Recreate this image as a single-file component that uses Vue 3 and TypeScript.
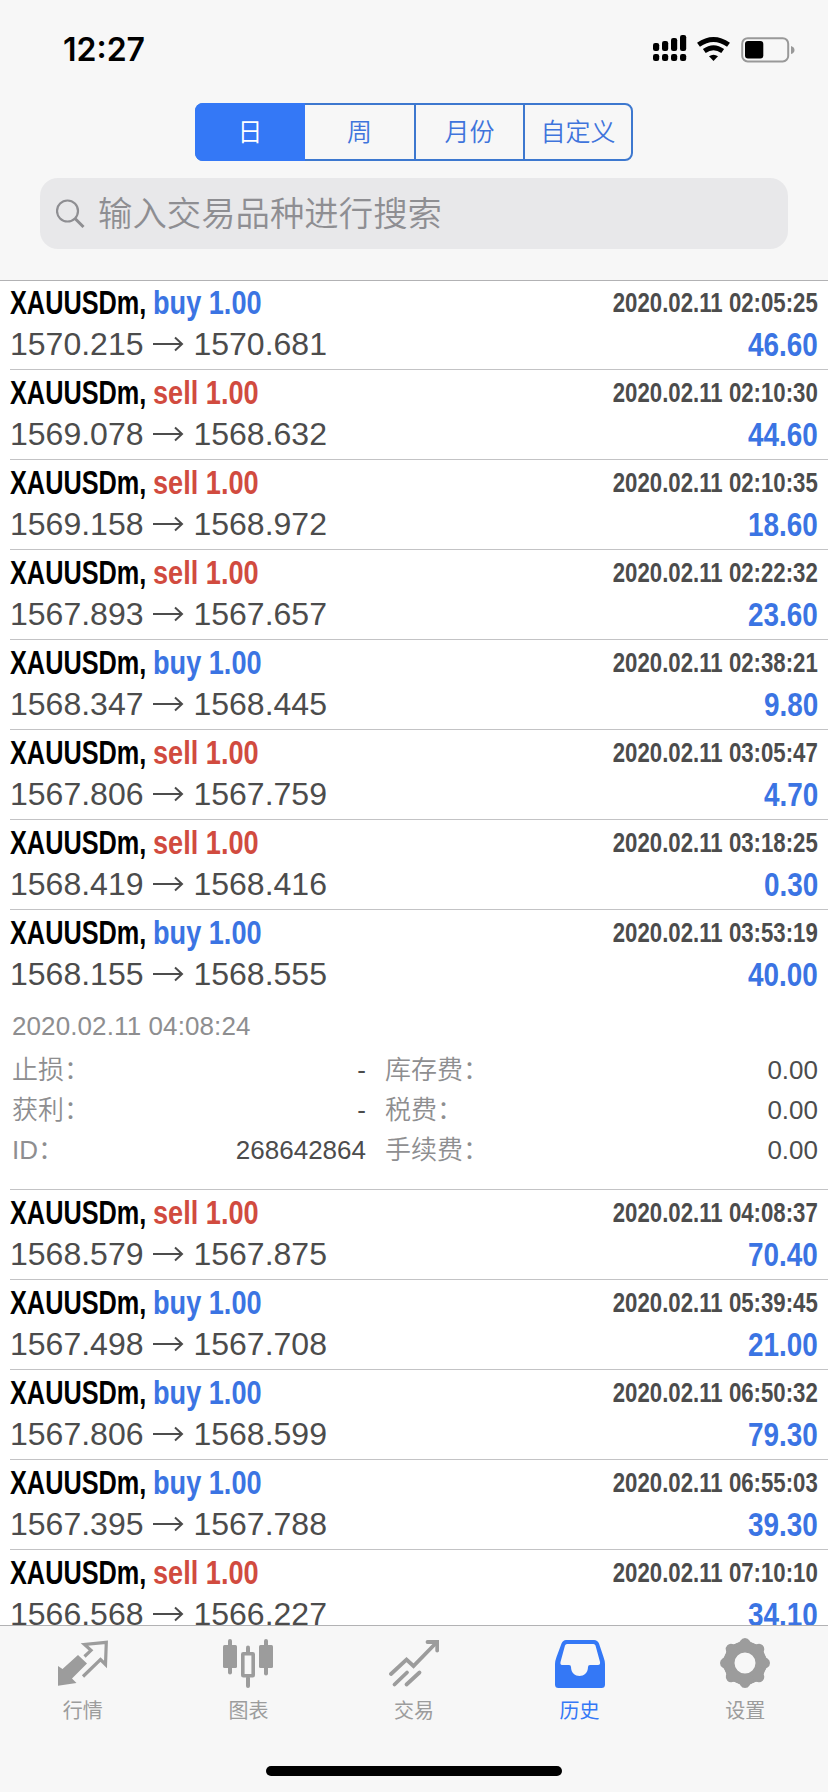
<script setup lang="ts">
interface Deal {
  side: 'buy' | 'sell'
  open: string
  close: string
  time: string
  profit: string
  expanded?: boolean
}

const periods: string[] = ['日', '周', '月份', '自定义']
const activePeriod = '日'

const deals: Deal[] = [
  { side: 'buy', open: '1570.215', close: '1570.681', time: '02:05:25', profit: '46.60' },
  { side: 'sell', open: '1569.078', close: '1568.632', time: '02:10:30', profit: '44.60' },
  { side: 'sell', open: '1569.158', close: '1568.972', time: '02:10:35', profit: '18.60' },
  { side: 'sell', open: '1567.893', close: '1567.657', time: '02:22:32', profit: '23.60' },
  { side: 'buy', open: '1568.347', close: '1568.445', time: '02:38:21', profit: '9.80' },
  { side: 'sell', open: '1567.806', close: '1567.759', time: '03:05:47', profit: '4.70' },
  { side: 'sell', open: '1568.419', close: '1568.416', time: '03:18:25', profit: '0.30' },
  { side: 'buy', open: '1568.155', close: '1568.555', time: '03:53:19', profit: '40.00', expanded: true },
  { side: 'sell', open: '1568.579', close: '1567.875', time: '04:08:37', profit: '70.40' },
  { side: 'buy', open: '1567.498', close: '1567.708', time: '05:39:45', profit: '21.00' },
  { side: 'buy', open: '1567.806', close: '1568.599', time: '06:50:32', profit: '79.30' },
  { side: 'buy', open: '1567.395', close: '1567.788', time: '06:55:03', profit: '39.30' },
  { side: 'sell', open: '1566.568', close: '1566.227', time: '07:10:10', profit: '34.10' },
]

const details = [
  { left: '止损：', leftValue: '-', right: '库存费：', rightValue: '0.00' },
  { left: '获利：', leftValue: '-', right: '税费：', rightValue: '0.00' },
  { left: 'ID：', leftValue: '268642864', right: '手续费：', rightValue: '0.00' },
]

const tabs = [
  { id: 'quotes', label: '行情' },
  { id: 'chart', label: '图表' },
  { id: 'trade', label: '交易' },
  { id: 'history', label: '历史' },
  { id: 'settings', label: '设置' },
]
</script>

<template>
  <div class="screen">
    <header class="header">
      <div class="status">
        <span class="clock">12:27</span>
        <svg class="status-icons" width="142" height="30" viewBox="0 0 142 30">
          <rect x="0" y="10" width="6.200" height="8" rx="2.200" />
          <rect x="9" y="8" width="6.200" height="10" rx="2.200" />
          <rect x="18" y="5" width="6.200" height="13" rx="2.200" />
          <rect x="27" y="2" width="6.200" height="16" rx="2.200" />
          <rect x="0" y="21" width="6.200" height="7" rx="2.200" />
          <rect x="9" y="21" width="6.200" height="7" rx="2.200" />
          <rect x="18" y="21" width="6.200" height="7" rx="2.200" />
          <rect x="27" y="21" width="6.200" height="7" rx="2.200" />
          <path d="M45.500 11.800 Q60.500 1.200 75.500 11.800" fill="none" stroke="#000" stroke-width="5" />
          <path d="M51.300 18 Q60.500 11.400 69.700 18" fill="none" stroke="#000" stroke-width="4.800" />
          <path d="M56 23.300 Q60.500 20 65 23.300 L60.500 28 Z" />
          <rect x="89.200" y="5.200" width="46" height="23.200" rx="5.500" fill="none" stroke="#999" stroke-width="2" />
          <rect x="92" y="8" width="18.300" height="17.500" rx="3" />
          <path d="M138 13 Q141.500 14 141.500 17 Q141.500 20 138 21 Z" fill="#999" />
        </svg>
      </div>
      <div class="segments">
        <div v-for="p in periods" :key="p" class="segment" :class="{ active: p === activePeriod }">{{ p }}</div>
      </div>
      <div class="search">
        <svg class="search-icon" width="30" height="30" viewBox="0 0 30 30" fill="none" stroke="#8e8e92">
          <circle cx="11.500" cy="12" r="10.500" stroke-width="2.200" />
          <path d="M19 19.500 L27.500 28" stroke-width="3" />
        </svg>
        <span class="placeholder">输入交易品种进行搜索</span>
      </div>
    </header>

    <main class="list">
      <article v-for="d in deals" :key="d.time" class="deal" :class="{ expanded: d.expanded }">
        <div class="summary">
          <div class="left">
            <div class="title">
              <span class="symbol"><b>XAUUSDm,</b></span>
              <b class="side" :class="d.side">{{ d.side }} 1.00</b>
            </div>
            <div class="prices">
              <span class="price">{{ d.open }}</span>
              <svg class="arrow" width="32" height="16" viewBox="0 0 32 16" fill="none" stroke="#4c4c4c" stroke-width="2">
                <path d="M1 8 H30 M23 1.500 L30 8 L23 14.500" />
              </svg>
              <span class="price">{{ d.close }}</span>
            </div>
          </div>
          <div class="right">
            <b class="time">2020.02.11 {{ d.time }}</b>
            <b class="profit">{{ d.profit }}</b>
          </div>
        </div>
        <div v-if="d.expanded" class="details">
          <div class="close-time">2020.02.11 04:08:24</div>
          <div v-for="r in details" :key="r.left" class="detail-row">
            <span class="label">{{ r.left }}</span>
            <span class="value">{{ r.leftValue }}</span>
            <span class="label second">{{ r.right }}</span>
            <span class="value">{{ r.rightValue }}</span>
          </div>
        </div>
      </article>
    </main>

    <nav class="tabbar">
      <div class="tabs">
        <div v-for="t in tabs" :key="t.id" class="tab" :class="{ current: t.id === 'history' }">
          <svg width="50" height="50" viewBox="0 0 50 50" fill="currentColor">
            <template v-if="t.id === 'quotes'">
              <path d="M0 28 L4.500 31 L20 17 L29 25.500 L14 40.500 L18.500 45 L0 47.800 Z" />
              <path d="M26.500 18.500 L33 12.300 L26.500 6.500 L48.300 4.300 L47.500 26.500 L42.500 21.500 L25 38.500" fill="none" stroke="currentColor" stroke-width="3.200" />
            </template>
            <template v-else-if="t.id === 'chart'">
              <rect x="0" y="7" width="14" height="23" rx="1.500" />
              <rect x="5" y="1" width="4" height="35.500" rx="2" />
              <rect x="19.800" y="15.800" width="10.400" height="22" rx="0.500" fill="none" stroke="currentColor" stroke-width="3.600" />
              <rect x="23" y="7.500" width="4" height="8" rx="2" />
              <rect x="23" y="38" width="4" height="12" rx="2" />
              <rect x="36" y="7" width="14" height="23" rx="1.500" />
              <rect x="41" y="1" width="4" height="36.500" rx="2" />
            </template>
            <template v-else-if="t.id === 'trade'">
              <g fill="none" stroke="currentColor" stroke-width="3.800" stroke-linecap="round">
                <path d="M2 36 L17.500 21.500 L24.500 28 L47.500 4.500" />
                <path d="M38.500 4 H48.200 V12.500" />
                <path d="M5.500 46.500 L18 34.500 M17.500 46.500 L30.500 34.500" />
              </g>
            </template>
            <template v-else-if="t.id === 'history'">
              <path fill-rule="evenodd" d="M11 2 H39 Q42.500 2 44 5.500 L48.500 19 Q50 23 50 26 V46.500 Q50 50 46.500 50 H3.500 Q0 50 0 46.500 V26 Q0 23 1.500 19 L6.500 5.500 Q8 2 11 2 Z M12 6 Q10.500 6 10 7.500 L5.500 24 Q5 27 7 27 H14 Q16 27 16 29 C16 41 33 41 33 29 Q33 27 35 27 H43 Q45.500 27 45 24 L40.500 7.500 Q40 6 38.500 6 Z" />
            </template>
            <template v-else>
              <g>
                <circle cx="25" cy="25" r="16" fill="none" stroke="currentColor" stroke-width="11" />
                <g v-for="n in 8" :key="n" :transform="`rotate(${n * 45} 25 25)`">
                  <path d="M14 6 Q18.500 6.500 20.500 2.500 Q22 0 25 0 Q28 0 29.500 2.500 Q31.500 6.500 36 6 L30 14 H20 Z" />
                </g>
              </g>
            </template>
          </svg>
          <span class="tab-label">{{ t.label }}</span>
        </div>
      </div>
      <div class="home"></div>
    </nav>
  </div>
</template>

<style>
body {
  margin: 0;
  background: #fff;
}
</style>

<style scoped>
.screen {
  width: 828px;
  height: 1792px;
  overflow: hidden;
  display: flex;
  flex-direction: column;
  background: #fff;
  font-family: "Liberation Sans", "Noto Sans CJK SC", sans-serif;
  white-space: nowrap;
}
.header {
  box-sizing: border-box;
  height: 280px;
  flex: none;
  background: #f7f7f7;
}
.status {
  box-sizing: border-box;
  height: 103px;
  padding: 33px 33px 0 63px;
  display: flex;
  justify-content: space-between;
  align-items: flex-start;
}
.clock {
  font: 600 32px/34px Inter, sans-serif;
  color: #000;
}
.segments {
  box-sizing: border-box;
  width: 438px;
  height: 58px;
  margin-left: 195px;
  display: grid;
  grid-template-columns: 108px 109px 109px 108px;
  border: 2px solid #3d78cf;
  border-radius: 8px;
}
.segment {
  display: flex;
  align-items: center;
  justify-content: center;
  font-size: 25px;
  line-height: 54px;
  font-weight: 350;
  color: #3f74dc;
}
.segment + .segment + .segment {
  border-left: 2px solid #3d78cf;
}
.segment.active {
  margin: -2px 0 -2px -2px;
  border-radius: 8px 0 0 8px;
  background: #3478f6;
  color: #fff;
}
.search {
  box-sizing: border-box;
  width: 748px;
  height: 71px;
  margin: 17px 0 0 40px;
  padding-left: 16px;
  display: flex;
  align-items: center;
  border-radius: 18px;
  background: #e8e8ea;
}
.placeholder {
  margin-left: 12px;
  font-size: 34.400px;
  line-height: 68px;
  font-weight: 350;
  color: #8e8e92;
}
.list {
  height: 1345px;
  flex: none;
  overflow: hidden;
}
.deal {
  box-sizing: border-box;
  height: 90px;
  margin-left: 10px;
  border-top: 1px solid #c3c3c5;
}
.deal:first-child {
  height: 89px;
  margin-left: 0;
  padding-left: 10px;
  border-top-color: #b2b2b4;
}
.deal:first-child .summary {
  margin-top: -1px;
}
.deal.expanded {
  height: 280px;
}
.summary {
  display: flex;
  justify-content: space-between;
  padding-right: 10px;
}
.title {
  display: flex;
  height: 44px;
  font-size: 33.500px;
  line-height: 45px;
}
.symbol {
  width: 143px;
  color: #000;
}
.symbol b {
  display: inline-block;
  transform: scaleX(0.755);
  transform-origin: 0 50%;
}
.side {
  transform: scaleX(0.81);
  transform-origin: 0 50%;
}
.buy {
  color: #3b74e3;
}
.sell {
  color: #d14b3f;
}
.prices {
  display: flex;
  align-items: center;
  height: 40px;
  font-size: 32px;
  line-height: 40px;
  color: #4c4c4c;
}
.arrow {
  margin: 0 9px;
}
.right {
  display: flex;
  flex-direction: column;
  align-items: flex-end;
}
.time {
  height: 44px;
  font-size: 27.500px;
  line-height: 46px;
  color: #4c4c4c;
  transform: scaleX(0.808);
  transform-origin: 100% 50%;
}
.profit {
  font-size: 33.500px;
  line-height: 42px;
  color: #3b74e3;
  transform: scaleX(0.832);
  transform-origin: 100% 50%;
}
.details {
  padding: 11px 10px 0 2px;
  font-size: 26px;
}
.close-time {
  height: 43px;
  line-height: 38px;
  letter-spacing: 0.1px;
  color: #8e8e90;
}
.detail-row {
  display: grid;
  grid-template-columns: 100px 254px 120px 1fr;
  height: 40px;
  line-height: 40px;
}
.label {
  font-weight: 350;
  color: #8e8e90;
}
.label.second {
  padding-left: 19px;
}
.value {
  text-align: right;
  color: #4c4c4c;
}
.tabbar {
  box-sizing: border-box;
  height: 167px;
  flex: none;
  border-top: 1px solid #b2b2b4;
  background: #f7f7f7;
}
.tabs {
  display: grid;
  grid-template-columns: repeat(5, 1fr);
  height: 140px;
}
.tab {
  display: flex;
  flex-direction: column;
  align-items: center;
  padding-top: 12px;
  color: #9c9c9c;
}
.tab.current {
  color: #3478f6;
}
.tab-label {
  margin-top: 9px;
  font-size: 20px;
  line-height: 28px;
}
.home {
  width: 296px;
  height: 10px;
  margin: 0 auto;
  border-radius: 5px;
  background: #000;
}
</style>
